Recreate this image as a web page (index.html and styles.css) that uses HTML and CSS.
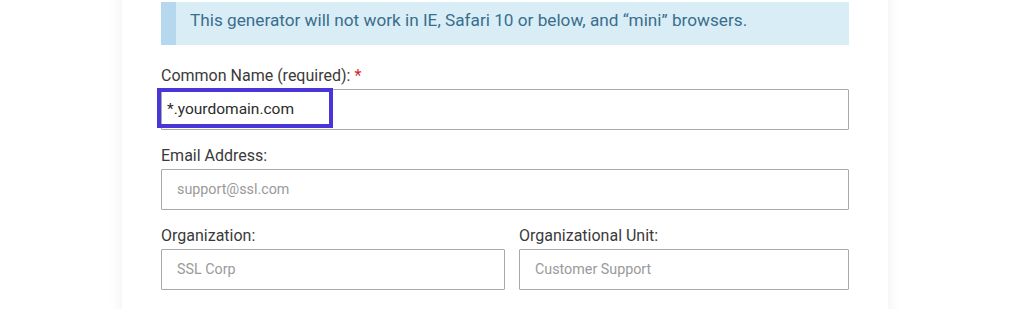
FILE: index.html
```html
<!DOCTYPE html>
<html lang="en">
<head>
<meta charset="utf-8">
<title>CSR Generator</title>
<link rel="stylesheet" href="styles.css">
</head>
<body>
<div class="card">
  <div class="alert">This generator will not work in IE, Safari 10 or below, and “mini” browsers.</div>
  <div class="field field-first">
    <label class="label">Common Name (required): <span class="req">*</span></label>
    <div class="input-wrap">
      <div class="input input-filled">*.yourdomain.com</div>
      <div class="highlight"></div>
    </div>
  </div>
  <div class="field">
    <label class="label">Email Address:</label>
    <div class="input">support@ssl.com</div>
  </div>
  <div class="row">
    <div class="field">
      <label class="label">Organization:</label>
      <div class="input">SSL Corp</div>
    </div>
    <div class="field">
      <label class="label">Organizational Unit:</label>
      <div class="input">Customer Support</div>
    </div>
  </div>
</div>
</body>
</html>
```
FILE: styles.css
```css
html, body {
  margin: 0;
  padding: 0;
  background: #ffffff;
  font-family: Roboto, "Liberation Sans", Arial, sans-serif;
}
.card {
  margin: -20px 0 0 122px;
  width: 766px;
  box-sizing: border-box;
  padding: 22px 39px 40px;
  background: #fff;
  box-shadow: 0 0 14px rgba(0, 0, 0, 0.07);
}
.alert {
  background: #d9edf7;
  border-left: 15px solid #b5d8ee;
  color: #3a6e8c;
  font-size: 17.2px;
  line-height: 24px;
  padding: 6px 14px 13px;
}
.field {
  margin-top: 16px;
}
.field-first {
  margin-top: 21px;
}
.label {
  display: block;
  font-size: 16px;
  line-height: 20px;
  color: #3a3a3a;
  margin-bottom: 3px;
}
.field-first .label {
  margin-bottom: 3px;
}
.req {
  color: #d9232e;
}
.input-wrap {
  position: relative;
}
.input {
  box-sizing: border-box;
  height: 41px;
  border: 1px solid #a9a9a9;
  border-radius: 1px;
  padding: 0 15px;
  font-size: 14.3px;
  line-height: 39px;
  color: #9a9a9a;
  background: #fff;
}
.input-filled {
  padding-left: 5px;
  color: #2b2b2b;
  font-size: 15.5px;
}
.highlight {
  position: absolute;
  left: -4px;
  top: -1px;
  width: 176px;
  height: 40px;
  box-sizing: border-box;
  border: 4px solid #4a36d8;
}
.row {
  display: grid;
  grid-template-columns: 344px 330px;
  column-gap: 14px;
}
```
